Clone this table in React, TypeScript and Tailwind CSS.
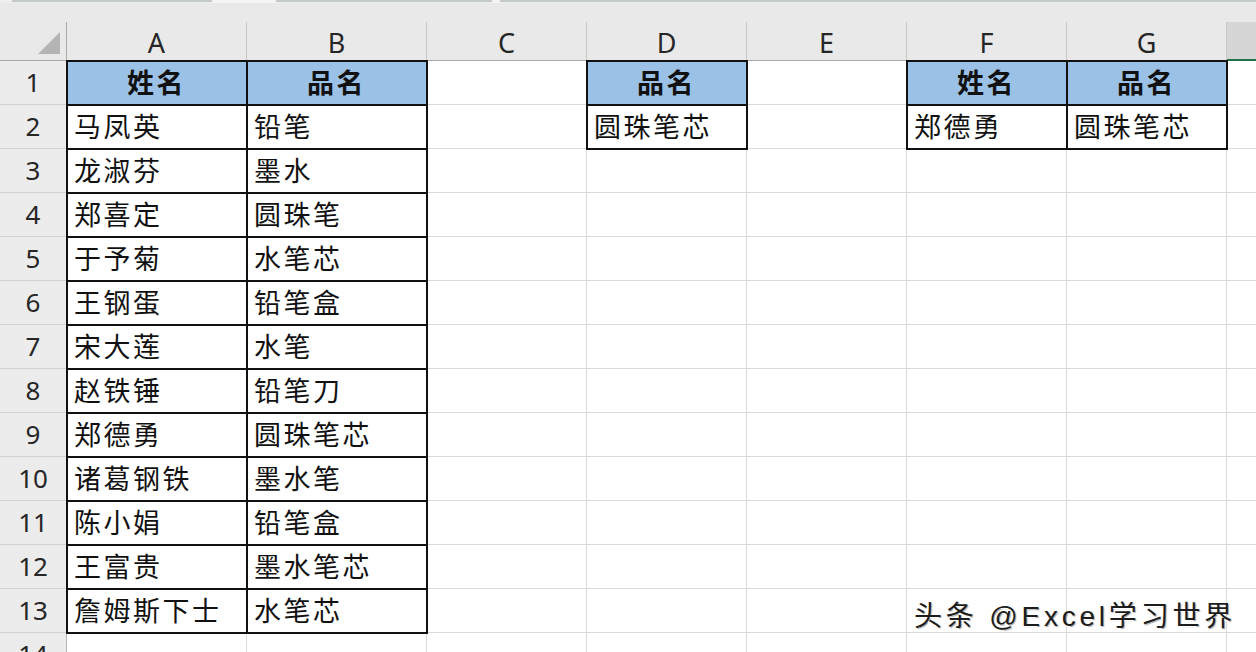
import React from "react";

const cols = [
	{ key: "A", w: "w-[180px]" },
	{ key: "B", w: "w-[180px]" },
	{ key: "C", w: "w-[160px]" },
	{ key: "D", w: "w-[160px]" },
	{ key: "E", w: "w-[160px]" },
	{ key: "F", w: "w-[160px]" },
	{ key: "G", w: "w-[160px]" },
];

const names = ["马凤英", "龙淑芬", "郑喜定", "于予菊", "王钢蛋", "宋大莲", "赵铁锤", "郑德勇", "诸葛钢铁", "陈小娟", "王富贵", "詹姆斯下士"];
const items = ["铅笔", "墨水", "圆珠笔", "水笔芯", "铅笔盒", "水笔", "铅笔刀", "圆珠笔芯", "墨水笔", "铅笔盒", "墨水笔芯", "水笔芯"];

type Cell = { text?: string; head?: boolean; box?: boolean };

// sheet contents: row number + column letter -> cell
const getCell = (row: number, col: string): Cell => {
	if (row === 1) {
		if (col === "A" || col === "F") return { text: "姓名", head: true, box: true };
		if (col === "B" || col === "D" || col === "G") return { text: "品名", head: true, box: true };
		return {};
	}
	if (row >= 2 && row <= 13) {
		if (col === "A") return { text: names[row - 2], box: true };
		if (col === "B") return { text: items[row - 2], box: true };
	}
	if (row === 2) {
		if (col === "D") return { text: "圆珠笔芯", box: true };
		if (col === "F") return { text: "郑德勇", box: true };
		if (col === "G") return { text: "圆珠笔芯", box: true };
	}
	return {};
};

const cjk = "font-['Noto_Sans_CJK_SC','Noto_Sans',sans-serif]";
const ui = "font-['Noto_Sans','Noto_Sans_CJK_SC',sans-serif]";

export default function App() {
	const rows = Array.from({ length: 14 }, (_, i) => i + 1);

	return (
		<div className="relative w-[1256px] h-[652px] overflow-hidden bg-white">
			{/* formula bar edge */}
			<div className="flex h-[3px] bg-[#eeeeee]">
				<div className="w-[12px]" />
				<div className="w-[200px] h-[2px] bg-[#c3cac6]" />
				<div className="w-[64px] bg-[#f4f4f4]" />
				<div className="w-[216px] h-[2px] bg-[#c3cac6]" />
				<div className="w-[8px] bg-[#f4f4f4]" />
				<div className="flex-1 h-[2px] bg-[#c3cac6]" />
			</div>
			<div className="h-[19px] bg-[#e9e9e9]" />

			{/* column headers */}
			<div className={`flex h-[39px] bg-[#e9e9e9] text-[#262626] ${ui}`}>
				<div className="w-[67px] shrink-0 flex items-end justify-end border-r border-b border-[#a9a9a9] pr-[6px] pb-[6px]">
					<svg width="22" height="22" viewBox="0 0 22 22">
						<polygon points="22,0 22,22 0,22" fill="#b4b4b4" />
					</svg>
				</div>
				{cols.map((c) => (
					<div
						key={c.key}
						className={`${c.w} shrink-0 flex items-center justify-center border-r border-b border-r-[#c8c8c8] border-b-[#a9a9a9] text-[27px] leading-none pt-[2px]`}
					>
						{c.key}
					</div>
				))}
				<div className="flex-1 bg-[#d6d6d6] border-b-2 border-[#1e7145]" />
			</div>

			{/* rows */}
			{rows.map((r) => (
				<div key={r} className="flex h-[44px]">
					<div
						className={`w-[67px] shrink-0 flex items-center justify-center bg-[#ececec] border-r border-b border-r-[#b5b5b5] border-b-[#d2d2d2] text-[26px] text-[#262626] ${ui}`}
					>
						{r}
					</div>
					{cols.map((c) => {
						const cell = getCell(r, c.key);
						return (
							<div
								key={c.key}
								className={`${c.w} shrink-0 flex items-center border-r border-b border-[#dadada] text-[27px] tracking-[2.5px] text-[#111] ${cjk} ${
									cell.box ? "outline-2 outline-[#111] -outline-offset-1 relative z-10" : ""
								} ${cell.head ? "bg-[#9bc2e6] justify-center font-bold" : "pl-[7px]"}`}
							>
								{cell.text}
							</div>
						);
					})}
					<div className="flex-1 border-b border-[#dadada]" />
				</div>
			))}

			{/* watermark */}
			<div
				className={`absolute left-[914px] top-[596px] z-20 text-[28px] tracking-[3.8px] text-[#1c1c1c] font-['Liberation_Sans','Noto_Sans_CJK_SC',sans-serif] [text-shadow:-2px_1px_0_#ffffff,1px_1px_1px_rgba(0,0,0,0.35)]`}
			>
				头条 @Excel学习世界
			</div>
		</div>
	);
}
